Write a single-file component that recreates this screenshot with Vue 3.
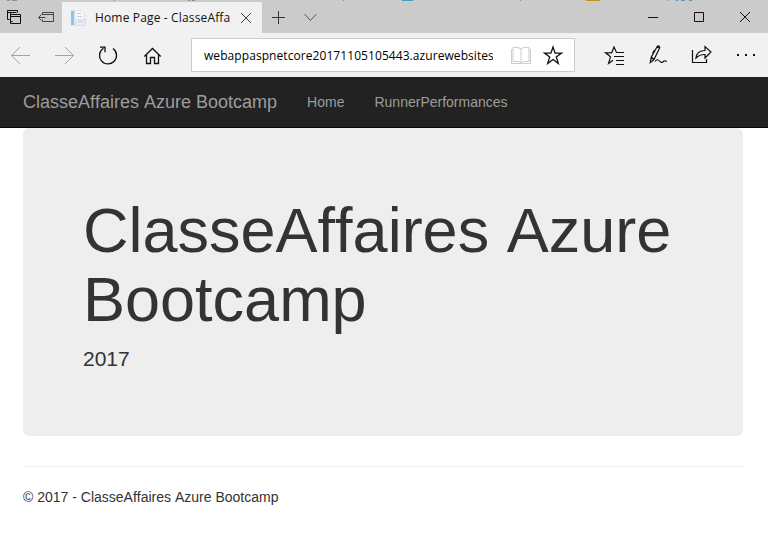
<script setup>
const title = 'ClasseAffaires Azure Bootcamp'
const links = ['Home', 'RunnerPerformances']
</script>

<template>
  <div class="window">
    <svg class="edge" width="768" height="2" viewBox="0 0 768 2" shape-rendering="crispEdges">
      <path fill="#c9cbc8" d="M0 0h768v1H0z" />
      <path fill="#8f9294" d="M7 0h3v1H7zM12 0h5v1h-5zM114 0h1v1h-1zM188 0h2v1h-2zM192 0h3v1h-3zM343 0h1v1h-1zM520 0h1v1h-1zM668 0h1v1h-1z" />
      <path fill="#4c9ac0" d="M402 0h11v1h-11zM676 0h2v1h-2zM681 0h4v1h-4zM689 0h3v1h-3z" />
      <path fill="#b89520" d="M586 0h14v1h-14z" />
      <path fill="#efd067" d="M0 1h768v1H0z" />
    </svg>
    <header class="tabs">
      <svg class="tab-tools" width="62" height="31" viewBox="0 2 62 31" fill="none" stroke="#111">
        <path d="M9.500 19.500h-2v-9h10v2M7.500 12.500h9M12.500 21.500h-2v-9" />
        <path d="M10.500 14.500h10v9h-10zM10.500 16.500h10" />
        <path stroke="#444" d="M42.500 15v-2.500h11v9h-11V19.500M42.500 14.500h11M38.500 17.500h7M41.500 14.500l-3 3 3 3" />
      </svg>
      <div class="tab">
        <svg width="16" height="18" viewBox="70 8 16 18">
          <path fill="#f4f7fb" stroke="#d5dde8" stroke-width=".8" d="M74.400 9.400h7l3 3v9h-10z" />
          <path fill="#8fc4e8" d="M71 10l3-.5V24l-3 .5z" />
          <path fill="#d8e9f5" d="M74 10h1.500v14H74z" />
          <path fill="#e8edf4" stroke="#d0d8e3" stroke-width=".8" d="M76.400 18.400h9v6h-11z" />
          <path stroke="#c3cedb" d="M77 12.500h4M77 15.500h5M78 20.500h5" />
        </svg>
        <span class="tab-title">Home Page - ClasseAffaires</span>
        <svg class="tab-close" width="12" height="12" viewBox="240 11 12 12" stroke="#444" stroke-width="1"><path d="M241 12l10 10M251 12l-10 10" /></svg>
      </div>
      <svg width="66" height="31" viewBox="262 2 66 31" fill="none" stroke="#333">
        <path d="M272 17.500h13M278.500 11v13" /><path stroke="#555" d="M304.500 14l6 6.500 6-6.500" />
      </svg>
      <svg class="controls" width="138" height="31" viewBox="630 2 138 31" fill="none" stroke="#111">
        <path d="M648 17.500h10M694.500 12.500h9v9h-9zM740 12l10 10M750 12l-10 10" />
      </svg>
    </header>
    <div class="toolbar">
      <svg width="191" height="44" viewBox="0 33 191 44" fill="none" stroke="#111" stroke-width="1.300">
        <path stroke="#a3a3a3" stroke-width="1" d="M30 55.500H11.500M20 47l-8.500 8.500L20 64M55 55.500h18.500M65 47l8.500 8.500L65 64" />
        <path d="M103.500 48.200a8.500 8.500 0 1 0 9.500.3M100 47.200h5v5" />
        <path d="M144.300 56.500l8.200-8 8.200 8M146.500 55v8.500h4v-6h4v6h4V55" />
      </svg>
      <div class="address">
        <span class="url">webappaspnetcore20171105105443.azurewebsites.net</span>
        <svg width="74" height="32" viewBox="500 39 74 32" fill="none">
          <path stroke="#cdcdcd" d="M513 47.500h5l3 1.500 3-1.500h5v14h-5.500l-2.500 1-2.500-1H513zM513 49.500h-1.500v14h19v-14H529M521 49v14" />
          <path stroke="#111" stroke-width="1.300" d="M553 47l2.100 6.100h6.400l-5.200 3.900 2 6.500-5.300-4-5.300 4 2-6.500-5.200-3.900h6.400z" />
        </svg>
      </div>
      <svg width="193" height="44" viewBox="575 33 193 44" fill="none" stroke="#111" stroke-width="1.200">
        <path d="M624 52.500h-7.500L614 47l-2.300 5.800h-6.200l5 4-2 6.700 4.500-3.300M614 56.500h10M616 60.500h8M616 64.500h8" />
        <path d="M650.300 62.500l1-5.500 5.800-10.200c1-1.700 3.300-.5 2.400 1.400L654 59.500zM651.300 57l2.700 2.500M654.500 50l-2 3.500M656.500 46.500l2.800 1.500M655 61.500c2-2.500 3.500-2 4.500-.5s2.500 2 4 .5 2.500-.5 3 .5" />
        <path d="M692.500 50v12.500h14V59M696 58c.5-4.500 3.500-7.500 9-7.500v-4l6 5.500-6 6v-3.500c-4-.2-6.500 1-9 3.500z" />
        <path fill="#111" stroke="none" d="M737 54h2v2h-2zM745 54h2v2h-2zM753 54h2v2h-2z" />
      </svg>
    </div>
    <nav class="navbar">
      <a class="brand">{{ title }}</a>
      <a v-for="link in links" :key="link" class="link">{{ link }}</a>
    </nav>
    <main class="page">
      <section class="jumbotron">
        <h1>{{ title }}</h1>
        <p>2017</p>
      </section>
      <hr />
      <footer>© 2017 - {{ title }}</footer>
    </main>
  </div>
</template>

<style>
body { margin: 0; background: #fff; overflow: hidden; }
</style>

<style scoped>
.window { width: 768px; height: 534px; overflow: hidden; background: #fff; font: 14px/20px "Liberation Sans", Arial, sans-serif; font-kerning: none; color: #333; }
svg { display: block; flex: none; }
.tabs { display: flex; height: 31px; background: #cbcbcb; }
.tab { box-sizing: border-box; width: 200px; display: flex; align-items: center; padding: 0 10px 0 8px; background: #f1f1f1; }
.tab-title { width: 135px; margin-left: 9px; overflow: hidden; white-space: nowrap; font: 12px/20px "Open Sans", "Noto Sans", sans-serif; letter-spacing: .15px; color: #111; }
.tab-close { margin-left: auto; }
.controls { margin-left: auto; }
.toolbar { display: flex; align-items: center; height: 44px; background: #f1f1f1; }
.address { box-sizing: border-box; width: 384px; height: 34px; display: flex; align-items: center; justify-content: space-between; padding-left: 12px; background: #fff; border: 1px solid #ccc; }
.url { width: 289px; padding-top: 1px; overflow: hidden; white-space: nowrap; font: 12px/20px "Open Sans", "Noto Sans", sans-serif; letter-spacing: .07px; color: #000; }
.navbar { box-sizing: border-box; height: 51px; display: flex; align-items: center; padding-left: 23px; background: #222; border-bottom: 1px solid #080808; color: #9d9d9d; }
.brand { font-size: 18px; margin-right: 30px; }
.link { margin-right: 30px; }
.page { padding: 0 25px 0 23px; }
.jumbotron { box-sizing: border-box; height: 308px; padding: 68px 60px 0; background: #eee; border-radius: 6px; }
h1 { margin: 0 0 10px; font-size: 63px; font-weight: 400; line-height: 69px; }
p { margin: 0; font-size: 21px; line-height: 30px; }
hr { margin: 30px 0 20px; border: 0; border-top: 1px solid #eee; }
</style>
